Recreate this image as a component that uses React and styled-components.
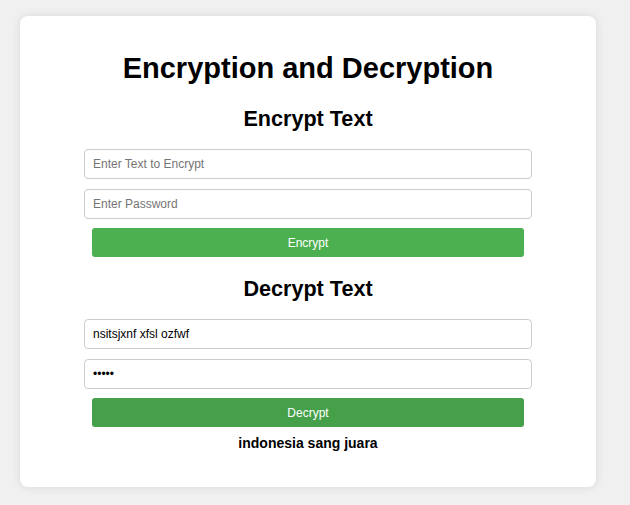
import React from "react";
import styled, { createGlobalStyle } from "styled-components";

const Global = createGlobalStyle`
  html, body { margin: 0; padding: 0; background: #f0f0f0; }
  body { font-family: "Liberation Sans", Arial, sans-serif; }
`;

const Page = styled.div`
  padding: 16px 34px 18px 20px;
`;

const Card = styled.div`
  width: 576px;
  box-sizing: border-box;
  background: #fff;
  border-radius: 8px;
  box-shadow: 0 0 10px rgba(0, 0, 0, 0.1);
  padding: 34px 0 36px;
  display: flex;
  flex-direction: column;
  align-items: center;
`;

const Title = styled.h1`
  margin: 0;
  font-size: 29px;
  line-height: 37px;
  font-weight: bold;
  color: #000;
`;

const Subtitle = styled.h2`
  margin: 19px 0 18px;
  font-size: 21.6px;
  line-height: 25px;
  font-weight: bold;
  color: #000;
`;

const Input = styled.input`
  width: 448px;
  height: 30px;
  box-sizing: border-box;
  border: 1px solid #ccc;
  border-radius: 4px;
  padding: 0 8px;
  margin: 0 0 10px;
  font-family: "Liberation Sans", Arial, sans-serif;
  font-size: 12px;
  color: #000;
  background: #fff;
  outline: none;
  &::placeholder { color: #757575; }
`;

const Button = styled.button`
  width: 432px;
  height: 29px;
  margin-top: -1px;
  border: none;
  border-radius: 3px;
  background: ${(p) => (p.$dark ? "#45a049" : "#4caf50")};
  color: #fff;
  font-family: "Liberation Sans", Arial, sans-serif;
  font-size: 12px;
  cursor: pointer;
`;

const Result = styled.p`
  margin: 8px 0 0;
  font-size: 14px;
  line-height: 16px;
  font-weight: bold;
  color: #000;
`;

export default function App() {
  return (
    <>
      <Global />
      <Page>
        <Card>
          <Title>Encryption and Decryption</Title>
          <Subtitle>Encrypt Text</Subtitle>
          <Input type="text" placeholder="Enter Text to Encrypt" />
          <Input type="password" placeholder="Enter Password" />
          <Button>Encrypt</Button>
          <Subtitle>Decrypt Text</Subtitle>
          <Input type="text" defaultValue="nsitsjxnf xfsl ozfwf" />
          <Input type="password" defaultValue="12345" />
          <Button $dark>Decrypt</Button>
          <Result>indonesia sang juara</Result>
        </Card>
      </Page>
    </>
  );
}
